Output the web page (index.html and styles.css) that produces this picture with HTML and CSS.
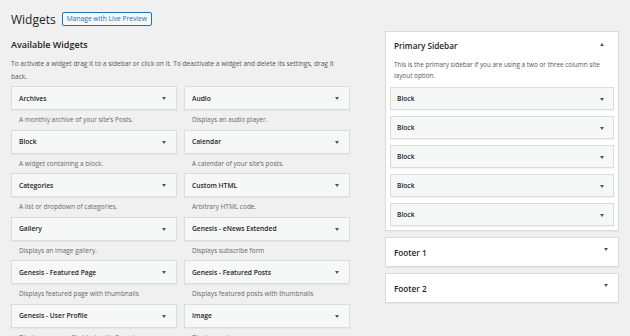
FILE: index.html
```html
<!DOCTYPE html>
<html lang="en">
<head>
  <meta charset="UTF-8" />
  <title>Widgets</title>
  <link rel="stylesheet" href="styles.css">
</head>
<body>
  <div class="wrap">
    <div class="page-header">
      <h1>Widgets</h1>
      <a class="btn-preview">Manage with Live Preview</a>
    </div>

    <div class="columns">
      <div class="available">
        <h2>Available Widgets</h2>
        <p class="intro">To activate a widget drag it to a sidebar or click on it. To deactivate a widget and delete its settings, drag it back.</p>

        <div class="widget-grid">
          <div class="widget">
            <div class="widget-top">Archives</div>
            <div class="widget-desc">A monthly archive of your site’s Posts.</div>
          </div>
          <div class="widget">
            <div class="widget-top">Audio</div>
            <div class="widget-desc">Displays an audio player.</div>
          </div>
          <div class="widget">
            <div class="widget-top">Block</div>
            <div class="widget-desc">A widget containing a block.</div>
          </div>
          <div class="widget">
            <div class="widget-top">Calendar</div>
            <div class="widget-desc">A calendar of your site’s posts.</div>
          </div>
          <div class="widget">
            <div class="widget-top">Categories</div>
            <div class="widget-desc">A list or dropdown of categories.</div>
          </div>
          <div class="widget">
            <div class="widget-top">Custom HTML</div>
            <div class="widget-desc">Arbitrary HTML code.</div>
          </div>
          <div class="widget">
            <div class="widget-top">Gallery</div>
            <div class="widget-desc">Displays an image gallery.</div>
          </div>
          <div class="widget">
            <div class="widget-top">Genesis - eNews Extended</div>
            <div class="widget-desc">Displays subscribe form</div>
          </div>
          <div class="widget">
            <div class="widget-top">Genesis - Featured Page</div>
            <div class="widget-desc">Displays featured page with thumbnails</div>
          </div>
          <div class="widget">
            <div class="widget-top">Genesis - Featured Posts</div>
            <div class="widget-desc">Displays featured posts with thumbnails</div>
          </div>
          <div class="widget">
            <div class="widget-top">Genesis - User Profile</div>
            <div class="widget-desc">Displays user profile block with Gravatar</div>
          </div>
          <div class="widget">
            <div class="widget-top">Image</div>
            <div class="widget-desc">Displays an image.</div>
          </div>
        </div>
      </div>

      <div class="sidebars">
        <div class="sidebar open">
          <div class="sidebar-name"><h3>Primary Sidebar</h3></div>
          <p class="sidebar-desc">This is the primary sidebar if you are using a two or three column site layout option.</p>
          <div class="sidebar-widget">Block</div>
          <div class="sidebar-widget">Block</div>
          <div class="sidebar-widget">Block</div>
          <div class="sidebar-widget">Block</div>
          <div class="sidebar-widget">Block</div>
        </div>
        <div class="sidebar">
          <div class="sidebar-name"><h3>Footer 1</h3></div>
        </div>
        <div class="sidebar">
          <div class="sidebar-name"><h3>Footer 2</h3></div>
        </div>
      </div>
    </div>
  </div>
</body>
</html>
```

FILE: styles.css
```css
html, body {
  overflow: hidden;
}
body {
  margin: 0;
  background: #f0f0f1;
  color: #1d2327;
  font-family: "Open Sans", "Noto Sans", sans-serif;
}
.wrap {
  padding: 8px 11px 0;
}
.page-header {
  display: flex;
  align-items: center;
  gap: 6px;
  height: 22px;
}
h1 {
  margin: 0;
  font-size: 12px;
  font-weight: 400;
}
.btn-preview {
  height: 12px;
  padding: 0 4px;
  border: 1px solid #2271b1;
  border-radius: 2px;
  background: #f6f7f7;
  color: #2271b1;
  font-size: 6.7px;
  line-height: 12px;
}
.columns {
  display: flex;
  gap: 35px;
  margin-top: 1px;
}
.available {
  width: 339px;
  padding-top: 7px;
}
h2 {
  margin: 0;
  font-size: 9px;
  font-weight: 600;
  line-height: 14px;
}
.intro {
  max-width: 332px;
  margin: 5px 0 3px;
  font-size: 6.6px;
  line-height: 13px;
  color: #50575e;
}
.widget-grid {
  display: grid;
  grid-template-columns: 166px 166px;
  column-gap: 7px;
}
.widget-top,
.sidebar-widget {
  position: relative;
  display: flex;
  align-items: center;
  height: 22px;
  padding: 0 7px;
  border: 1px solid #dcdcde;
  background: #f6f7f7;
  box-shadow: 0 1px 1px rgba(0, 0, 0, 0.04);
  font-size: 6.7px;
  font-weight: 600;
}
.widget-top::after,
.sidebar-widget::after,
.sidebar-name::after {
  content: "";
  position: absolute;
  right: 10px;
  top: 50%;
  margin-top: -1px;
  border-left: 2px solid transparent;
  border-right: 2px solid transparent;
  border-top: 3px solid #50575e;
}
.widget-desc {
  height: 19.5px;
  padding-left: 8px;
  font-size: 6.5px;
  line-height: 19px;
  color: #646970;
}
.sidebars {
  width: 234px;
  display: flex;
  flex-direction: column;
  gap: 6px;
}
.sidebar {
  border: 1px solid #dcdcde;
  background: #fff;
  box-shadow: 0 1px 1px rgba(0, 0, 0, 0.04);
}
.sidebar.open {
  padding: 0 4px 4px;
}
.sidebar-name {
  position: relative;
  display: flex;
  align-items: center;
  height: 28px;
  padding: 0 8px;
}
.sidebar.open .sidebar-name {
  height: 27px;
  padding: 0 4px;
}
.sidebar.open .sidebar-name::after {
  right: 10px;
  margin-top: -3px;
  border-top: none;
  border-bottom: 3px solid #50575e;
}
.sidebar-name::after {
  margin-top: -4px;
}
h3 {
  margin: 0;
  font-size: 8.2px;
  font-weight: 600;
}
.sidebar-desc {
  margin: 0 4px 6px;
  font-size: 6.4px;
  line-height: 11px;
  color: #50575e;
}
.sidebar-widget {
  height: 21px;
  margin-bottom: 6px;
  padding: 0 6px;
}
.sidebar-widget:last-child {
  margin-bottom: 0;
}
.sidebar-widget::after {
  right: 9px;
}
```
